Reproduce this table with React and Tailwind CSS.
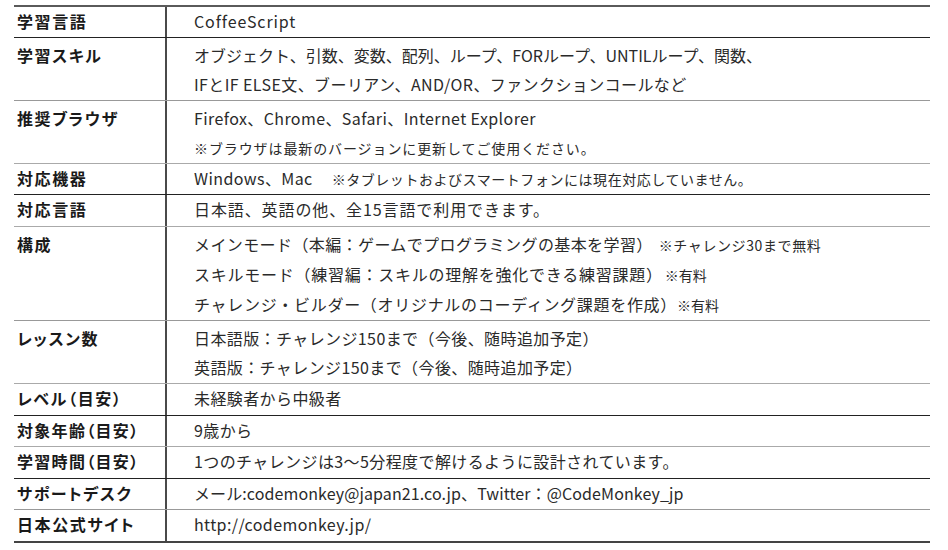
const rows = [
  { label: '学習言語', h: 'h-[31px]', line: 'border-[#222]', lines: [{ t: <>CoffeeScript</>, c: 'tracking-[0.9px]' }] },
  {
    label: '学習スキル',
    h: 'h-[63px]',
    line: 'border-[#999]',
    lines: [
      { t: <>オブジェクト、引数、変数、配列、ループ、FORループ、UNTILループ、関数、</>, c: 'tracking-[0px]' },
      { t: <>IFとIF ELSE文、ブーリアン、AND/OR、ファンクションコールなど</> },
    ],
  },
  {
    label: '推奨ブラウザ',
    h: 'h-[63px]',
    line: 'border-[#aaa]',
    lines: [
      { t: <>Firefox、Chrome、Safari、Internet Explorer</> },
      { t: <span className="text-[14px] tracking-[0.9px]">※ブラウザは最新のバージョンに更新してご使用ください。</span> },
    ],
  },
  {
    label: '対応機器',
    h: 'h-[31px]',
    line: 'border-[#222]',
    lines: [
      {
        t: (
          <>
            Windows、Mac
            <span className="ml-[19px] text-[14px] tracking-[0.55px]">※タブレットおよびスマートフォンには現在対応していません。</span>
          </>
        ),
      },
    ],
  },
  { label: '対応言語', h: 'h-[32px]', line: 'border-[#aaa]', lines: [{ t: <>日本語、英語の他、全15言語で利用できます。</>, c: 'tracking-[0.9px]' }] },
  {
    label: '構成',
    h: 'h-[94px]',
    line: 'border-[#999]',
    lines: [
      {
        t: (
          <>
            メインモード（本編：ゲームでプログラミングの基本を学習）
            <span className="ml-[6px] text-[14px] tracking-[0.6px]">※チャレンジ30まで無料</span>
          </>
        ),
      },
      {
        t: (
          <>
            スキルモード（練習編：スキルの理解を強化できる練習課題）
            <span className="ml-[2px] text-[14px] tracking-[0px]">※有料</span>
          </>
        ),
        c: 'tracking-[0.75px]',
      },
      {
        t: (
          <>
            チャレンジ・ビルダー（オリジナルのコーディング課題を作成）
            <span className="ml-[0px] text-[14px] tracking-[0px]">※有料</span>
          </>
        ),
        c: 'tracking-[0.7px]',
      },
    ],
  },
  {
    label: 'レッスン数',
    h: 'h-[63px]',
    line: 'border-[#aaa]',
    lines: [{ t: <>日本語版：チャレンジ150まで（今後、随時追加予定）</> }, { t: <>英語版：チャレンジ150まで（今後、随時追加予定）</> }],
  },
  { label: 'レベル（目安）', h: 'h-[32px]', line: 'border-[#222]', lines: [{ t: <>未経験者から中級者</> }] },
  { label: '対象年齢（目安）', lt: 'tracking-[1.3px]', h: 'h-[31px]', line: 'border-[#aaa]', lines: [{ t: <>9歳から</> }] },
  {
    label: '学習時間（目安）',
    lt: 'tracking-[1.3px]',
    h: 'h-[32px]',
    line: 'border-[#222]',
    lines: [{ t: <>1つのチャレンジは3〜5分程度で解けるように設計されています。</> }],
  },
  {
    label: 'サポートデスク',
    h: 'h-[31px]',
    line: 'border-[#999]',
    lines: [{ t: <>メール:codemonkey@japan21.co.jp、Twitter：@CodeMonkey_jp</>, c: 'tracking-[0.1px]' }],
  },
  { label: '日本公式サイト', h: 'h-[33px]', line: 'border-[#444]', last: true, lines: [{ t: <>http://codemonkey.jp/</> }] },
];

// 複数行の行は上の余白を少し多めに
const pad = { 1: 'pt-[0px]', 2: 'pt-[3px]', 3: 'pt-[3px]' };

export default function App() {
  return (
    <div className="w-[948px] h-[550px] bg-white pt-[5px] pl-[14px] font-['Noto_Sans_CJK_JP',sans-serif]">
      <div className="w-[916px] border-t-2 border-[#5a5a5a]">
        {rows.map((r) => (
          <div key={r.label} className={`flex ${r.h} ${r.last ? 'border-b-2' : 'border-b'} ${r.line}`}>
            <div
              className={`w-[153px] shrink-0 border-r-2 border-[#4a4a4a] pl-[3px] ${pad[r.lines.length]} text-[16px] leading-[29px] font-bold ${r.lt || 'tracking-[1.6px]'} text-[#1a1a1a] [font-feature-settings:'palt']`}
            >
              {r.label}
            </div>
            <div className={`pl-[27px] ${pad[r.lines.length]} text-[16px] leading-[29px] text-[#2a2a2a]`}>
              {r.lines.map((l, i) => (
                <div key={i} className={`whitespace-nowrap ${l.c || 'tracking-[0.4px]'}`}>
                  {l.t}
                </div>
              ))}
            </div>
          </div>
        ))}
      </div>
    </div>
  );
}
